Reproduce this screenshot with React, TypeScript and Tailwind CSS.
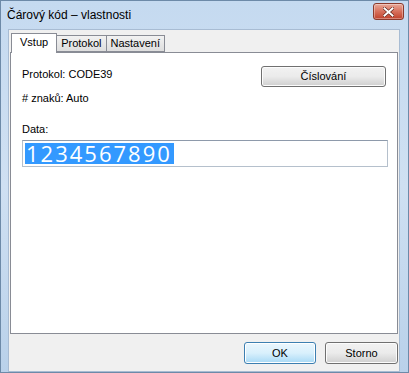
import React from "react";

const font = { fontFamily: '"Segoe UI", "Liberation Sans", Arial, sans-serif' };

function Tab({ label, active }: { label: string; active?: boolean }) {
  if (active) {
    return (
      <div className="relative z-10 -mb-px flex h-[20px] items-center border border-b-0 border-[#898c95] bg-white px-[8px] pb-[2px] text-[11px] text-black">
        {label}
      </div>
    );
  }
  return (
    <div className="-ml-px mt-[2px] flex h-[17px] items-center border border-[#898c95] bg-linear-to-b from-[#f2f2f2] to-[#dedede] px-[4px] text-[11px] text-black first:ml-0">
      {label}
    </div>
  );
}

function Button({ children, focused, className = "" }: { children: React.ReactNode; focused?: boolean; className?: string }) {
  return (
    <button
      type="button"
      className={`flex items-center justify-center rounded-[3px] border text-[11px] text-black ${
        focused
          ? "border-[#3c7fb1] bg-linear-to-b from-[#eaf6fd] via-[#d9f0fc] to-[#a7d9f5] shadow-[inset_0_0_0_1px_#ffffff]"
          : "border-[#707070] bg-linear-to-b from-[#f2f2f2] via-[#ebebeb] to-[#cfcfcf] shadow-[inset_0_0_0_1px_#fcfcfc]"
      } ${className}`}
    >
      {children}
    </button>
  );
}

export default function App() {
  return (
    <div
      style={font}
      className="flex h-[373px] w-[409px] flex-col overflow-hidden border border-[#6d8aa8] bg-linear-to-b from-[#c5daf0] via-[#cfe0f2] to-[#b9d1ea]"
    >
      {/* Title bar */}
      <div className="flex h-[28px] shrink-0 items-start justify-between pl-[6px] pr-[4px]">
        <span className="mt-[5px] text-[12px] text-black">Čárový kód – vlastnosti</span>
        <div className="mt-[2px] flex h-[17px] w-[31px] items-center justify-center rounded-[3px] border border-[#8b3a2c] bg-linear-to-b from-[#e8a898] via-[#d7705c] to-[#c0402a] shadow-[inset_0_0_0_1px_rgba(255,255,255,0.35)]">
          <svg width="11" height="10" viewBox="0 0 11 10">
            <path d="M1.5 1.5 L9.5 8.5 M9.5 1.5 L1.5 8.5" stroke="#5a1f14" strokeWidth="3.2" strokeLinecap="square" />
            <path d="M1.5 1.5 L9.5 8.5 M9.5 1.5 L1.5 8.5" stroke="#ffffff" strokeWidth="2" strokeLinecap="square" />
          </svg>
        </div>
      </div>

      {/* Client area */}
      <div className="ml-[7px] mr-[8px] flex flex-1 flex-col border border-[#a8bcd3] bg-[#f0f0f0] pb-[6px] pt-[3px]">
        <div className="flex pl-[2px]">
          <Tab label="Vstup" active />
          <Tab label="Protokol" />
          <Tab label="Nastavení" />
        </div>

        <div className="mx-[1px] flex h-[282px] flex-col border border-[#898c95] bg-white px-[11px] pt-[13px] text-[11px] text-black">
          <div className="flex items-start justify-between">
            <span className="leading-[16px]">Protokol: CODE39</span>
            <Button className="h-[21px] w-[125px]">Číslování</Button>
          </div>
          <span className="mt-[3px] leading-[16px]">#&nbsp;znaků: Auto</span>
          <span className="mt-[15px] leading-[16px]">Data:</span>
          <div className="mt-[3px] flex h-[27px] w-[366px] items-center border border-[#b5c0cc] border-t-[#8e9aab] bg-white pl-[2px]">
            <span
              className="bg-[#3399ff] pl-px pr-[2px] text-[22px] leading-[21px] tracking-[2px] text-white"
              style={{ fontFamily: '"Open Sans", "Liberation Sans", sans-serif' }}
            >
              1234567890
            </span>
          </div>
        </div>

        <div className="mt-[8px] flex justify-end gap-[9px] pr-[1px]">
          <Button focused className="h-[22px] w-[72px]">OK</Button>
          <Button className="h-[22px] w-[73px]">Storno</Button>
        </div>
      </div>
    </div>
  );
}
